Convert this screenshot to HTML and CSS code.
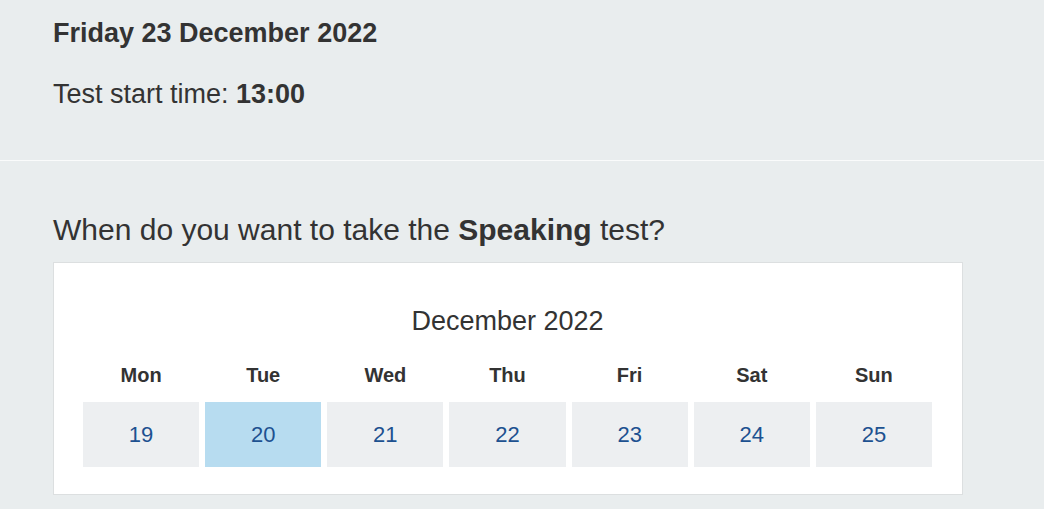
FILE: index.html
```html
<!DOCTYPE html>
<html lang="en">
<head>
    <meta charset="UTF-8">
    <meta name="viewport" content="width=device-width, initial-scale=1.0">
    <title>Book test</title>
    <link rel="stylesheet" href="styles.css">
</head>
<body>
    <div class="booked">
        <h2 class="booked-date">Friday 23 December 2022</h2>
        <p class="booked-time">Test start time: <b>13:00</b></p>
    </div>

    <div class="choose">
        <h3 class="choose-title">When do you want to take the <b>Speaking</b> test?</h3>
        <div class="calendar">
            <div class="month">December 2022</div>
            <div class="week">
                <div class="day-name">Mon</div>
                <div class="day-name">Tue</div>
                <div class="day-name">Wed</div>
                <div class="day-name">Thu</div>
                <div class="day-name">Fri</div>
                <div class="day-name">Sat</div>
                <div class="day-name">Sun</div>

                <a class="day" href="#">19</a>
                <a class="day selected" href="#">20</a>
                <a class="day" href="#">21</a>
                <a class="day" href="#">22</a>
                <a class="day" href="#">23</a>
                <a class="day" href="#">24</a>
                <a class="day" href="#">25</a>
            </div>
        </div>
    </div>
</body>
</html>
```

FILE: styles.css
```css
*{
    margin: 0;
    padding: 0;
    box-sizing: border-box;
}
body{
    background-color: #e9edee;
    color: #333;
    font-family: "Liberation Sans", Arial, sans-serif;
}
.booked{
    padding: 17px 53px 50px 53px;
    border-bottom: 1px solid #fafbfb;
}
.booked-date{
    font-size: 27px;
    font-weight: bold;
    line-height: 32px;
}
.booked-time{
    font-size: 27px;
    line-height: 32px;
    margin-top: 29px;
}
.choose{
    padding: 51px 53px 0 53px;
}
.choose-title{
    font-size: 30px;
    font-weight: normal;
    line-height: 36px;
    margin-bottom: 14px;
}
.calendar{
    width: 910px;
    background-color: #fff;
    border: 1px solid #dcdfe0;
    padding: 42px 30px 27px 29px;
}
.month{
    font-size: 27px;
    line-height: 32px;
    text-align: center;
    margin-bottom: 26px;
}
.week{
    display: grid;
    grid-template-columns: repeat(7, 1fr);
    column-gap: 6px;
    row-gap: 15px;
}
.day-name{
    font-size: 20px;
    font-weight: bold;
    line-height: 24px;
    text-align: center;
}
.day{
    display: flex;
    justify-content: center;
    align-items: center;
    height: 65px;
    background-color: #edeff1;
    color: #1d5190;
    font-size: 22px;
    text-decoration: none;
}
.day.selected{
    background-color: #b7dcf0;
}
```
